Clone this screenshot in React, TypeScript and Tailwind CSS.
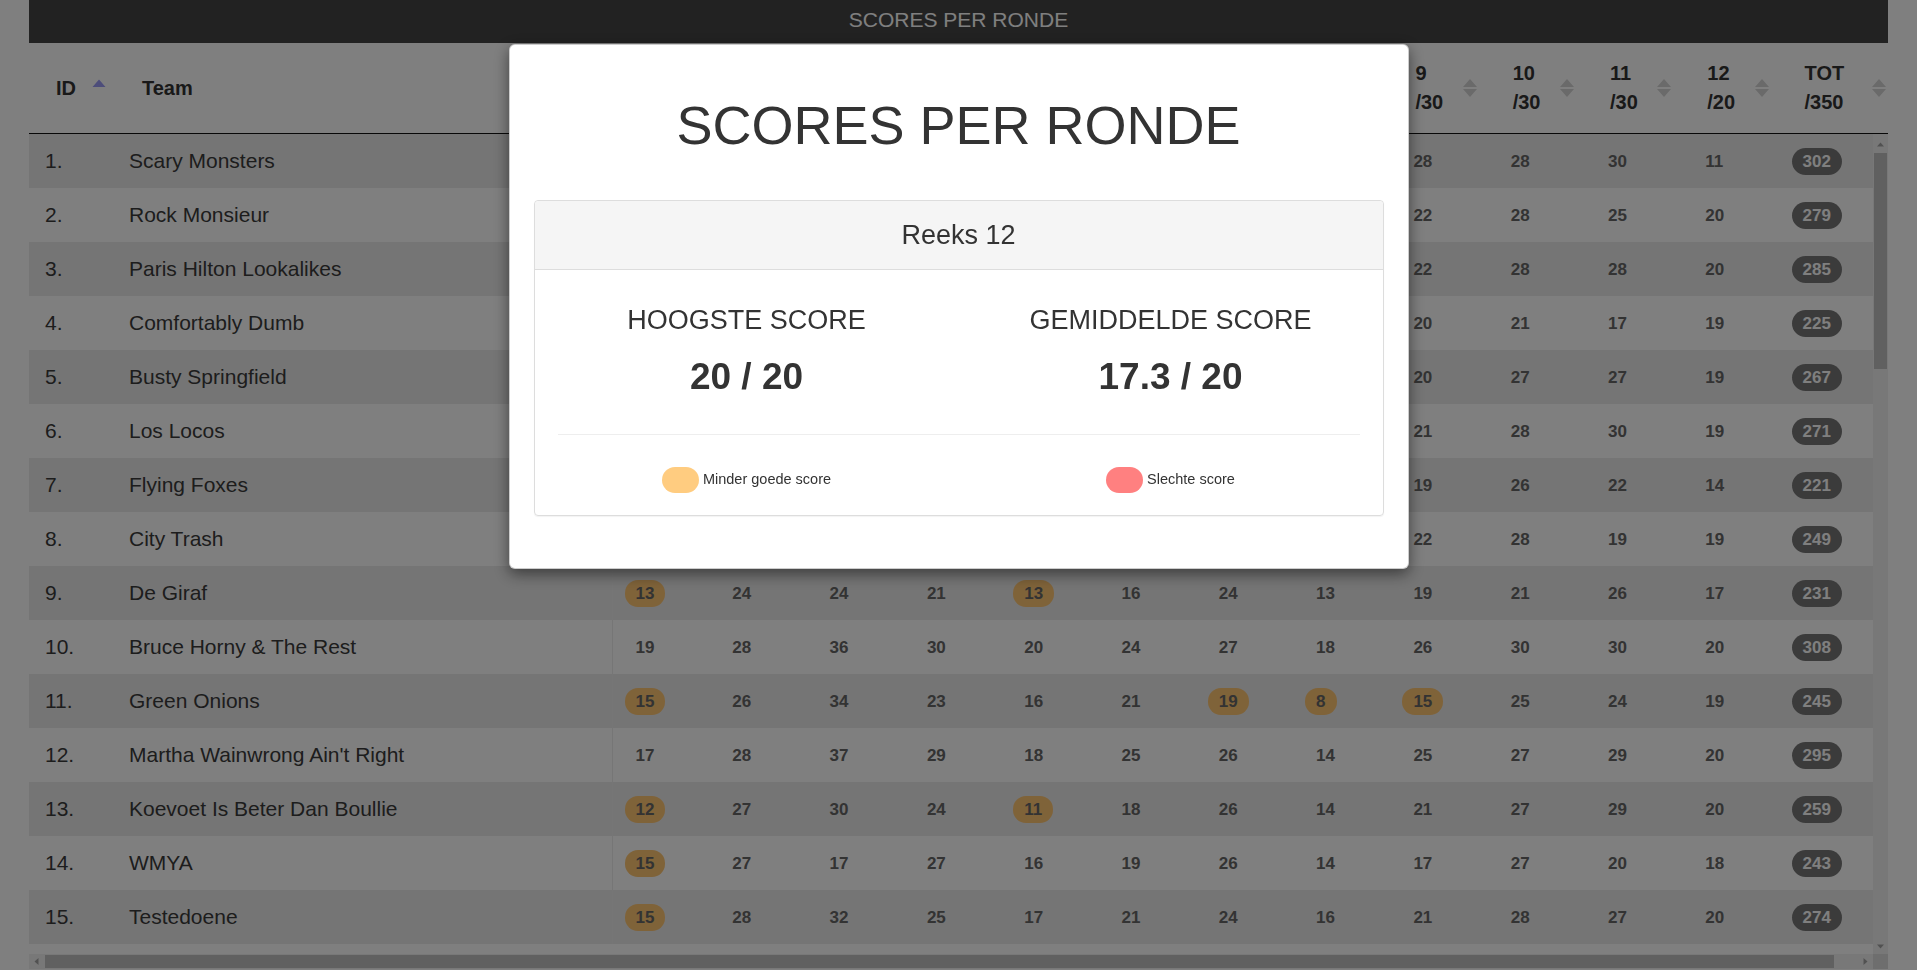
import React from "react";

const maxes = [20, 30, 40, 30, 20, 40, 30, 30, 30, 30, 30, 20];

type Row = { name: string; scores: number[]; flags: number[] };

const rows: Row[] = [
  { name: "Scary Monsters", scores: [18, 28, 36, 28, 17, 24, 27, 27, 28, 28, 30, 11], flags: [] },
  { name: "Rock Monsieur", scores: [17, 27, 31, 27, 16, 22, 25, 19, 22, 28, 25, 20], flags: [] },
  { name: "Paris Hilton Lookalikes", scores: [18, 26, 33, 28, 16, 23, 24, 19, 22, 28, 28, 20], flags: [] },
  { name: "Comfortably Dumb", scores: [16, 21, 25, 22, 14, 17, 19, 14, 20, 21, 17, 19], flags: [] },
  { name: "Busty Springfield", scores: [17, 25, 30, 26, 15, 21, 24, 16, 20, 27, 27, 19], flags: [] },
  { name: "Los Locos", scores: [17, 26, 29, 27, 16, 20, 23, 15, 21, 28, 30, 19], flags: [] },
  { name: "Flying Foxes", scores: [14, 22, 24, 21, 13, 17, 18, 11, 19, 26, 22, 14], flags: [] },
  { name: "City Trash", scores: [16, 24, 28, 25, 15, 19, 21, 13, 22, 28, 19, 19], flags: [] },
  { name: "De Giraf", scores: [13, 24, 24, 21, 13, 16, 24, 13, 19, 21, 26, 17], flags: [0, 4] },
  { name: "Bruce Horny & The Rest", scores: [19, 28, 36, 30, 20, 24, 27, 18, 26, 30, 30, 20], flags: [] },
  { name: "Green Onions", scores: [15, 26, 34, 23, 16, 21, 19, 8, 15, 25, 24, 19], flags: [0, 6, 7, 8] },
  { name: "Martha Wainwrong Ain't Right", scores: [17, 28, 37, 29, 18, 25, 26, 14, 25, 27, 29, 20], flags: [] },
  { name: "Koevoet Is Beter Dan Boullie", scores: [12, 27, 30, 24, 11, 18, 26, 14, 21, 27, 29, 20], flags: [0, 4] },
  { name: "WMYA", scores: [15, 27, 17, 27, 16, 19, 26, 14, 17, 27, 20, 18], flags: [0] },
  { name: "Testedoene", scores: [15, 28, 32, 25, 17, 21, 24, 16, 21, 28, 27, 20], flags: [0] },
];

function SortIcon({ active }: { active?: boolean }) {
  if (active) {
    return (
      <svg width="14" height="20" viewBox="0 0 14 20" className="absolute right-[11px] top-1/2 -translate-y-1/2">
        <path d="M0.5 9 L7 1.5 L13.5 9 Z" fill="#9a9af5" />
      </svg>
    );
  }
  return (
    <svg width="14" height="20" viewBox="0 0 14 20" className="absolute right-[11px] top-1/2 -translate-y-1/2">
      <path d="M0 9 L7 1 L14 9 Z" fill="#d4d4d4" />
      <path d="M0 11 L14 11 L7 19 Z" fill="#d4d4d4" />
    </svg>
  );
}

// scrollbar arrow button
function Arrow({ dir }: { dir: "up" | "down" | "left" | "right" }) {
  const d = {
    up: "M4 9.5 L7.5 5.5 L11 9.5 Z",
    down: "M4 5.5 L11 5.5 L7.5 9.5 Z",
    left: "M9.5 4 L9.5 11 L5.5 7.5 Z",
    right: "M5.5 4 L5.5 11 L9.5 7.5 Z",
  }[dir];
  return (
    <svg width="15" height="15" viewBox="0 0 15 15" className="shrink-0">
      <path d={d} fill="#a3a3a3" />
    </svg>
  );
}

const colW = "w-[97.3px]";

export default function App() {
  return (
    <div className="h-[970px] overflow-hidden bg-white font-['Liberation_Sans',Arial,sans-serif] text-[#333]">
      <div className="mx-[29px]">
        {/* Title bar */}
        <div className="flex h-[43px] items-center justify-center bg-[#444] pb-[3px] text-[21px] text-white">
          SCORES PER RONDE
        </div>

        {/* Table header */}
        <div className="h-[91px] overflow-hidden border-b border-[#111] bg-white">
          <div className="flex h-full w-[1868px] text-[20px] font-bold leading-[29px] text-[#333]">
            <div className="relative flex w-[88px] shrink-0 items-center pl-[27px]">
              ID
              <SortIcon active />
            </div>
            <div className="relative flex w-[495px] shrink-0 items-center pl-[25px]">
              Team
              <SortIcon />
            </div>
            {maxes.map((m, i) => (
              <div key={i} className={`relative flex ${colW} shrink-0 items-center pl-[25px]`}>
                <div>
                  <div>{i + 1}</div>
                  <div>/{m}</div>
                </div>
                <SortIcon />
              </div>
            ))}
            <div className="relative flex w-[117px] shrink-0 items-center pl-[25px]">
              <div>
                <div>TOT</div>
                <div>/350</div>
              </div>
              <SortIcon />
            </div>
          </div>
        </div>

        {/* Table body with its scrollbars */}
        <div className="flex h-[820px]">
          <div className="flex-1 overflow-hidden bg-white">
            <table className="w-[1867.6px] table-fixed border-collapse">
              <colgroup>
                <col className="w-[88px]" />
                <col className="w-[495px]" />
                {maxes.map((_, i) => (
                  <col key={i} className={colW} />
                ))}
                <col className="w-[117px]" />
              </colgroup>
              <tbody>
                {rows.map((r, ri) => {
                  const tot = r.scores.reduce((a, b) => a + b, 0);
                  return (
                    <tr key={ri} className={`h-[54px] ${ri % 2 === 0 ? "bg-[#ebebeb]" : "bg-white"}`}>
                      <td className="pl-4 text-[21px] whitespace-nowrap text-[#3a3a3a]">{ri + 1}.</td>
                      <td className="pl-3 text-[21px] whitespace-nowrap text-[#3a3a3a]">{r.name}</td>
                      {r.scores.map((s, ci) => (
                        <td key={ci} className={`pl-3 ${ci === 0 ? "border-l border-[#ececec]" : ""}`}>
                          <span
                            className={`inline-block rounded-[13px] px-[11px] py-[4px] text-[17px] leading-[19px] font-bold text-[#666] ${
                              r.flags.includes(ci) ? "bg-[#ffc673]" : ""
                            }`}
                          >
                            {s}
                          </span>
                        </td>
                      ))}
                      <td className="pl-3">
                        <span className="inline-block rounded-full bg-[#777] px-[11px] py-[4px] text-[17px] leading-[19px] font-bold text-white">
                          {tot}
                        </span>
                      </td>
                    </tr>
                  );
                })}
              </tbody>
            </table>
          </div>
          <div className="flex w-[15px] flex-col bg-[#f1f1f1] pt-[3px]">
            <Arrow dir="up" />
            <div className="flex-1 pt-[1px]">
              <div className="mx-[1px] h-[216px] bg-[#c1c1c1]" />
            </div>
            <Arrow dir="down" />
          </div>
        </div>
        <div className="flex h-[15px]">
          <div className="flex flex-1 bg-[#f1f1f1]">
            <Arrow dir="left" />
            <div className="flex-1 py-[1px] pl-[1px]">
              <div className="h-full w-[1789px] bg-[#c1c1c1]" />
            </div>
            <Arrow dir="right" />
          </div>
          <div className="w-[15px] bg-[#dcdcdc]" />
        </div>
      </div>

      {/* Backdrop */}
      <div className="fixed inset-0 bg-black/50" />

      {/* Modal */}
      <div className="fixed inset-0 flex justify-center">
        <div className="mt-[44px] h-fit w-[900px] rounded-[6px] border border-black/20 bg-white px-[24px] pb-[52px] shadow-[0_5px_15px_rgba(0,0,0,0.5)]">
          <h1 className="pt-[50px] text-center text-[54px] leading-[60px] text-[#333]">SCORES PER RONDE</h1>
          <div className="mt-[45px] rounded-[4px] border border-[#ddd] shadow-[0_1px_1px_rgba(0,0,0,0.05)]">
            <div className="flex h-[69px] items-center justify-center rounded-t-[4px] border-b border-[#ddd] bg-[#f5f5f5] text-[27px] text-[#333]">
              Reeks 12
            </div>
            <div className="grid grid-cols-2 pt-[35px] text-center text-[#333]">
              <div>
                <div className="text-[27px] leading-[30px]">HOOGSTE SCORE</div>
                <div className="mt-[21px] text-[37px] leading-[41px] font-bold">20 / 20</div>
              </div>
              <div>
                <div className="text-[27px] leading-[30px]">GEMIDDELDE SCORE</div>
                <div className="mt-[21px] text-[37px] leading-[41px] font-bold">17.3 / 20</div>
              </div>
            </div>
            <div className="mx-[23px] mt-[37px] border-t border-[#eee]" />
            <div className="grid grid-cols-2 pt-[32px] pb-[22px] text-[14.5px] text-[#333]">
              <div className="flex items-center justify-center gap-[4px]">
                <span className="h-[26px] w-[37px] rounded-[13px] bg-[#ffcc80]" />
                Minder goede score
              </div>
              <div className="flex items-center justify-center gap-[4px]">
                <span className="h-[26px] w-[37px] rounded-[13px] bg-[#ff8080]" />
                Slechte score
              </div>
            </div>
          </div>
        </div>
      </div>
    </div>
  );
}
